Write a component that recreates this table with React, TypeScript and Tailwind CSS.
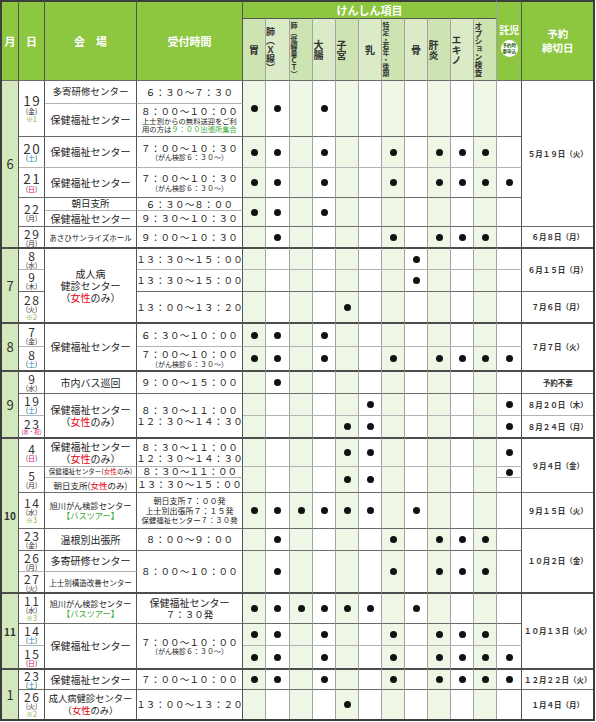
import React from 'react';

// row top borders: month boundary, dark line, light line
const T = {
  h: 'border-t-2 border-t-[#3d3d3d]',
  m: 'border-t-2 border-t-[#4d4d4d]',
  d: 'border-t border-t-[#6b6b6b]',
  l: 'border-t border-t-[#b3b3b3]',
};
type Top = keyof typeof T;

const R = 'border-r border-r-[#555]';
const GREEN = 'bg-[#8dc63f]';

const Dot = () => <div className="mx-auto w-[7px] h-[7px] rounded-full bg-[#111]" />;

const Fem = () => (
  <>
    （<span className="text-[#e60012]">女性</span>のみ）
  </>
);

function Mon({ n, rs, t, small }: { n: string; rs: number; t: Top; small?: boolean }) {
  return (
    <td
      rowSpan={rs}
      className={`${T[t]} ${R} bg-[#d4e8bd] text-[#333] text-center ${
        small ? 'text-[10px] font-bold' : 'text-[13px]'
      }`}
    >
      {n}
    </td>
  );
}

function Day({
  n,
  w,
  note,
  rs = 1,
  t,
  sm,
}: {
  n: string;
  w: string;
  note?: string;
  rs?: number;
  t: Top;
  sm?: boolean;
}) {
  const color =
    w === '土' ? 'text-[#0092d6]' : w === '日' || w === '水・祝' ? 'text-[#e4007f]' : 'text-[#333]';
  return (
    <td rowSpan={rs} className={`${T[t]} ${R} bg-white text-center`}>
      <div className="flex flex-col items-center leading-none text-[#333]">
        <span className={`${sm ? 'text-[12px]' : 'text-[13.5px]'} tracking-[1.5px] pl-[1.5px] leading-none`}>
          {n}
        </span>
        <span className={`${w.length > 1 ? 'text-[5.5px]' : 'text-[7px]'} leading-none`}>
          (<span className={color}>{w}</span>)
        </span>
        {note && <span className="text-[7px] leading-none mt-[1px] text-[#7fae3c]">{note}</span>}
      </div>
    </td>
  );
}

function Place({
  children,
  rs = 1,
  t,
  cls = 'text-[10px]',
}: {
  children: React.ReactNode;
  rs?: number;
  t: Top;
  cls?: string;
}) {
  return (
    <td
      rowSpan={rs}
      className={`${T[t]} ${R} bg-white text-center whitespace-nowrap text-[#222] leading-[1.2] ${cls}`}
    >
      {children}
    </td>
  );
}

function Time({ children, rs = 1, t }: { children: React.ReactNode; rs?: number; t: Top }) {
  return (
    <td rowSpan={rs} className={`${T[t]} ${R} bg-white text-center whitespace-nowrap text-[#222]`}>
      <div className="flex flex-col items-center">{children}</div>
    </td>
  );
}

const Main = ({ children }: { children: React.ReactNode }) => (
  <span className="text-[9.5px] leading-[1.15] tracking-[0.2px]">{children}</span>
);
const Sub = ({ children }: { children: React.ReactNode }) => (
  <span className="text-[7px] leading-[1.15]">{children}</span>
);

function Checks({
  on,
  rs = 1,
  t,
  from = 0,
  to = 11,
}: {
  on: number[];
  rs?: number;
  t: Top;
  from?: number;
  to?: number;
}) {
  const cells = [];
  for (let i = from; i <= to; i++) {
    const tint = i % 2 === 0 && i < 11 ? 'bg-[#eef6e5]' : 'bg-white';
    const r = i === 11 ? 'border-r border-r-[#555]' : 'border-r border-r-[#a3a3a3]';
    cells.push(
      <td key={i} rowSpan={rs} className={`${T[t]} ${r} ${tint}`}>
        {on.includes(i) && <Dot />}
      </td>
    );
  }
  return <>{cells}</>;
}

function Res({ children, rs = 1, t }: { children: React.ReactNode; rs?: number; t: Top }) {
  return (
    <td
      rowSpan={rs}
      className={`${T[t]} bg-white text-center whitespace-nowrap text-[7.5px] font-bold text-[#333]`}
    >
      {children}
    </td>
  );
}

const SUBS: { label: string; size: string; vertical?: boolean }[] = [
  { label: '胃', size: 'text-[10px]' },
  { label: '肺（Ｘ線）', size: 'text-[9px]', vertical: true },
  { label: '肺（低線量ＣＴ）', size: 'text-[7px]', vertical: true },
  { label: '大腸', size: 'text-[10px]', vertical: true },
  { label: '子宮', size: 'text-[10px]', vertical: true },
  { label: '乳', size: 'text-[10px]' },
  { label: '特定・若年・後期', size: 'text-[6.8px]', vertical: true },
  { label: '骨', size: 'text-[10px]' },
  { label: '肝炎', size: 'text-[10px]', vertical: true },
  { label: 'エキノ', size: 'text-[10px]', vertical: true },
  { label: 'オプション検査', size: 'text-[7.8px]', vertical: true },
];

export default function App() {
  return (
    <div className="w-[596px] h-[722px] bg-white font-['Noto_Sans_CJK_JP','Noto_Sans',sans-serif]">
      <table className="table-fixed border-separate border-spacing-0 w-[595px] border-l-2 border-b-2 border-r-2 border-[#3d3d3d]">
        <colgroup>
          <col className="w-[17px]" />
          <col className="w-[26px]" />
          <col className="w-[92px]" />
          <col className="w-[106px]" />
          <col className="w-[23px]" />
          <col className="w-[24px]" />
          <col className="w-[23px]" />
          <col className="w-[23px]" />
          <col className="w-[23px]" />
          <col className="w-[23px]" />
          <col className="w-[23px]" />
          <col className="w-[23px]" />
          <col className="w-[23px]" />
          <col className="w-[23px]" />
          <col className="w-[23px]" />
          <col className="w-[25px]" />
          <col className="w-[71px]" />
        </colgroup>
        <thead className="leading-none">
          <tr className="h-[18px]">
            <th rowSpan={2} className={`${T.h} ${R} ${GREEN} text-white text-[11px] font-bold`}>
              月
            </th>
            <th rowSpan={2} className={`${T.h} ${R} ${GREEN} text-white text-[11px] font-bold`}>
              日
            </th>
            <th rowSpan={2} className={`${T.h} ${R} ${GREEN} text-white text-[11px] font-bold`}>
              会　場
            </th>
            <th rowSpan={2} className={`${T.h} ${R} ${GREEN} text-white text-[11px] font-bold`}>
              受付時間
            </th>
            <th colSpan={11} className={`${T.h} border-r border-r-[#a3a3a3] ${GREEN} text-white text-[11px] font-bold`}>
              けんしん項目
            </th>
            <th rowSpan={2} className={`${T.h} ${R} ${GREEN} text-white`}>
              <div className="flex flex-col items-center">
                <span className="text-[10px] font-bold leading-none">託児</span>
                <div className="mt-[5px] w-[17px] h-[17px] rounded-full bg-white flex flex-col items-center justify-center text-[4.5px] leading-[1.15] text-[#2f5f18] font-bold">
                  <span>予約時</span>
                  <span>要申込</span>
                </div>
              </div>
            </th>
            <th rowSpan={2} className={`${T.h} ${GREEN} text-white text-[10.5px] font-bold leading-[1.35]`}>
              予約
              <br />
              締切日
            </th>
          </tr>
          <tr className="h-[62px]">
            {SUBS.map((s, i) => (
              <th
                key={s.label}
                className={`border-t border-t-[#555] border-r border-r-[#a3a3a3] ${
                  i % 2 === 0 ? 'bg-[#cde3b2]' : 'bg-[#dbebc7]'
                } text-[#333] font-bold`}
              >
                {s.vertical ? (
                  <div className={`mx-auto w-fit [writing-mode:vertical-rl] leading-none ${s.size}`}>{s.label}</div>
                ) : (
                  <div className={`leading-none ${s.size}`}>{s.label}</div>
                )}
              </th>
            ))}
          </tr>
        </thead>
        <tbody>
          {/* 6月 */}
          <tr className="h-[23px]">
            <Mon n="6" rs={7} t="d" />
            <Day n="19" w="金" note="※1" rs={2} t="d" />
            <Place t="d" cls="text-[9.5px]">多寄研修センター</Place>
            <Time t="d">
              <Main>６：３０～７：３０</Main>
            </Time>
            <Checks on={[0, 1, 3]} rs={2} t="d" />
            <Res rs={6} t="d">５月１９日（火）</Res>
          </tr>
          <tr className="h-[33px]">
            <Place t="l">保健福祉センター</Place>
            <Time t="l">
              <Main>８：００～１０：００</Main>
              <span className="text-[7.3px] leading-[1.2]">
                上士別からの無料送迎をご利
                <br />
                用の方は<span className="text-[#3aa935]">９：００出張所集合</span>
              </span>
            </Time>
          </tr>
          <tr className="h-[31px]">
            <Day n="20" w="土" t="d" />
            <Place t="d">保健福祉センター</Place>
            <Time t="d">
              <Main>７：００～１０：３０</Main>
              <Sub>（がん検診６：３０～）</Sub>
            </Time>
            <Checks on={[0, 1, 3, 6, 8, 9, 10]} t="d" />
          </tr>
          <tr className="h-[30px]">
            <Day n="21" w="日" t="l" />
            <Place t="l">保健福祉センター</Place>
            <Time t="l">
              <Main>７：００～１０：３０</Main>
              <Sub>（がん検診６：３０～）</Sub>
            </Time>
            <Checks on={[0, 1, 3, 6, 8, 9, 10, 11]} t="l" />
          </tr>
          <tr className="h-[13px]">
            <Day n="22" w="月" rs={2} t="d" sm />
            <Place t="d" cls="text-[9.5px]">朝日支所</Place>
            <Time t="d">
              <Main>６：３０～８：００</Main>
            </Time>
            <Checks on={[0, 1, 3]} rs={2} t="d" />
          </tr>
          <tr className="h-[16px]">
            <Place t="l">保健福祉センター</Place>
            <Time t="l">
              <Main>９：３０～１０：３０</Main>
            </Time>
          </tr>
          <tr className="h-[21px]">
            <Day n="29" w="月" t="d" sm />
            <Place t="d" cls="text-[7.5px]">あさひサンライズホール</Place>
            <Time t="d">
              <Main>９：００～１０：３０</Main>
            </Time>
            <Checks on={[1, 6, 8, 9, 10]} t="d" />
            <Res t="d">６月８日（月）</Res>
          </tr>

          {/* 7月 */}
          <tr className="h-[22px]">
            <Mon n="7" rs={3} t="m" />
            <Day n="8" w="水" t="m" sm />
            <Place rs={3} t="m">
              成人病
              <br />
              健診センター
              <br />
              <Fem />
            </Place>
            <Time t="m">
              <Main>１３：３０～１５：００</Main>
            </Time>
            <Checks on={[7]} t="m" />
            <Res rs={2} t="m">６月１５日（月）</Res>
          </tr>
          <tr className="h-[22px]">
            <Day n="9" w="木" t="l" sm />
            <Time t="l">
              <Main>１３：３０～１５：００</Main>
            </Time>
            <Checks on={[7]} t="l" />
          </tr>
          <tr className="h-[31px]">
            <Day n="28" w="火" note="※2" t="d" sm />
            <Time t="d">
              <Main>１３：００～１３：２０</Main>
            </Time>
            <Checks on={[4]} t="d" />
            <Res t="d">７月６日（月）</Res>
          </tr>

          {/* 8月 */}
          <tr className="h-[24px]">
            <Mon n="8" rs={2} t="m" />
            <Day n="7" w="金" t="m" sm />
            <Place rs={2} t="m">保健福祉センター</Place>
            <Time t="m">
              <Main>６：３０～１０：００</Main>
            </Time>
            <Checks on={[0, 1, 3]} t="m" />
            <Res rs={2} t="m">７月７日（火）</Res>
          </tr>
          <tr className="h-[24px]">
            <Day n="8" w="土" t="l" sm />
            <Time t="l">
              <Main>７：００～１０：００</Main>
              <Sub>（がん検診６：３０～）</Sub>
            </Time>
            <Checks on={[0, 1, 3, 6, 8, 9, 10, 11]} t="l" />
          </tr>

          {/* 9月 */}
          <tr className="h-[23px]">
            <Mon n="9" rs={3} t="m" />
            <Day n="9" w="水" t="m" sm />
            <Place t="m">市内バス巡回</Place>
            <Time t="m">
              <Main>９：００～１５：００</Main>
            </Time>
            <Checks on={[1]} t="m" />
            <Res t="m">予約不要</Res>
          </tr>
          <tr className="h-[22px]">
            <Day n="19" w="土" t="d" sm />
            <Place rs={2} t="d">
              保健福祉センター
              <br />
              <Fem />
            </Place>
            <Time rs={2} t="d">
              <Main>８：３０～１１：００</Main>
              <Main>１２：３０～１４：３０</Main>
            </Time>
            <Checks on={[5, 11]} t="d" />
            <Res t="d">８月２０日（木）</Res>
          </tr>
          <tr className="h-[22px]">
            <Day n="23" w="水・祝" t="l" sm />
            <Checks on={[4, 5, 11]} t="l" />
            <Res t="l">８月２４日（月）</Res>
          </tr>

          {/* 10月 */}
          <tr className="h-[29px]">
            <Mon n="10" rs={7} t="m" small />
            <Day n="4" w="日" t="m" sm />
            <Place t="m">
              保健福祉センター
              <br />
              <Fem />
            </Place>
            <Time t="m">
              <Main>８：３０～１１：００</Main>
              <Main>１２：３０～１４：３０</Main>
            </Time>
            <Checks on={[4, 5, 11]} t="m" />
            <Res rs={3} t="m">９月４日（金）</Res>
          </tr>
          <tr className="h-[11px]">
            <Day n="5" w="月" rs={2} t="l" sm />
            <Place t="l" cls="text-[6.6px]">
              保健福祉センター(<span className="text-[#e60012]">女性</span>のみ)
            </Place>
            <Time t="l">
              <span className="text-[9.5px] leading-none">８：３０～１１：００</span>
            </Time>
            <Checks on={[4, 5]} rs={2} t="l" from={0} to={10} />
            <Checks on={[11]} t="l" from={11} to={11} />
          </tr>
          <tr className="h-[15px]">
            <Place t="l" cls="text-[8.5px]">
              朝日支所(<span className="text-[#e60012]">女性</span>のみ)
            </Place>
            <Time t="l">
              <span className="text-[9.5px] leading-none">１３：３０～１５：００</span>
            </Time>
            <Checks on={[]} t="l" from={11} to={11} />
          </tr>
          <tr className="h-[36px]">
            <Day n="14" w="水" note="※3" t="d" sm />
            <Place t="d" cls="text-[8.2px]">
              旭川がん検診センター
              <br />
              <span className="text-[#3aa935]">【バスツアー】</span>
            </Place>
            <Time t="d">
              <span className="text-[8px] leading-[1.2]">朝日支所７：００発</span>
              <span className="text-[8px] leading-[1.2]">上士別出張所７：１５発</span>
              <span className="text-[7.4px] leading-[1.2]">保健福祉センター７：３０発</span>
            </Time>
            <Checks on={[0, 1, 2, 3, 4, 5, 7]} t="d" />
            <Res t="d">９月１５日（火）</Res>
          </tr>
          <tr className="h-[22px]">
            <Day n="23" w="金" t="d" sm />
            <Place t="d">温根別出張所</Place>
            <Time t="d">
              <Main>８：００～９：００</Main>
            </Time>
            <Checks on={[1, 6, 8, 9, 10]} t="d" />
            <Res rs={3} t="d">１０月２日（金）</Res>
          </tr>
          <tr className="h-[21px]">
            <Day n="26" w="月" t="d" sm />
            <Place t="d">多寄研修センター</Place>
            <Time rs={2} t="d">
              <Main>８：００～１０：００</Main>
            </Time>
            <Checks on={[1, 6, 8, 9, 10]} rs={2} t="d" />
          </tr>
          <tr className="h-[21px]">
            <Day n="27" w="火" t="l" sm />
            <Place t="l" cls="text-[7.5px]">上士別構造改善センター</Place>
          </tr>

          {/* 11月 */}
          <tr className="h-[31px]">
            <Mon n="11" rs={3} t="m" small />
            <Day n="11" w="水" note="※3" t="m" sm />
            <Place t="m" cls="text-[8.2px]">
              旭川がん検診センター
              <br />
              <span className="text-[#3aa935]">【バスツアー】</span>
            </Place>
            <Time t="m">
              <span className="text-[10px] leading-[1.15]">保健福祉センター</span>
              <span className="text-[9.5px] leading-[1.15]">７：３０発</span>
            </Time>
            <Checks on={[0, 1, 2, 3, 4, 5, 7]} t="m" />
            <Res rs={3} t="m">１０月１３日（火）</Res>
          </tr>
          <tr className="h-[22px]">
            <Day n="14" w="土" t="d" sm />
            <Place rs={2} t="d">保健福祉センター</Place>
            <Time rs={2} t="d">
              <Main>７：００～１０：００</Main>
              <Sub>（がん検診６：３０～）</Sub>
            </Time>
            <Checks on={[0, 1, 3, 6, 8, 9, 10]} t="d" />
          </tr>
          <tr className="h-[23px]">
            <Day n="15" w="日" t="l" sm />
            <Checks on={[0, 1, 3, 6, 8, 9, 10, 11]} t="l" />
          </tr>

          {/* 1月 */}
          <tr className="h-[21px]">
            <Mon n="1" rs={2} t="m" />
            <Day n="23" w="土" t="m" sm />
            <Place t="m">保健福祉センター</Place>
            <Time t="m">
              <Main>７：００～１０：００</Main>
            </Time>
            <Checks on={[0, 1, 3, 6, 8, 9, 10, 11]} t="m" />
            <Res t="m">１２月２２日（火）</Res>
          </tr>
          <tr className="h-[30px]">
            <Day n="26" w="火" note="※2" t="d" sm />
            <Place t="d" cls="text-[9.3px]">
              成人病健診センター
              <br />
              <Fem />
            </Place>
            <Time t="d">
              <Main>１３：００～１３：２０</Main>
            </Time>
            <Checks on={[4]} t="d" />
            <Res t="d">１月４日（月）</Res>
          </tr>
        </tbody>
      </table>
    </div>
  );
}
